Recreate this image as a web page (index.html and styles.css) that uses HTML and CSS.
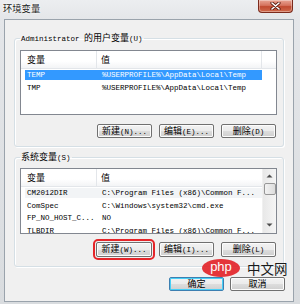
FILE: index.html
```html
<!DOCTYPE html>
<html>
<head>
<meta charset="utf-8">
<link rel="stylesheet" href="styles.css">
</head>
<body>
<div class="win">
  <div class="titlebar">
    <span class="title">环境变量</span>
    <div class="close"><svg width="11" height="8" viewBox="0 0 11 8"><path d="M2 1 L9 7 M9 1 L2 7" stroke="#5a1a10" stroke-width="3.2" stroke-linecap="round"/><path d="M2 1 L9 7 M9 1 L2 7" stroke="#fff" stroke-width="1.6" stroke-linecap="round"/></svg></div>
  </div>
  <div class="client">
    <fieldset class="group g1">
      <legend>Administrator <span class="c">的用户变量</span>(U)</legend>
      <div class="list l1">
        <div class="hdr">
          <div class="hc h1"><span class="c">变量</span></div>
          <div class="hc h2"><span class="c">值</span></div>
          <div class="hc hf"></div>
        </div>
        <div class="row sel"><span class="k">TEMP</span><span class="v">%USERPROFILE%\AppData\Local\Temp</span></div>
        <div class="row"><span class="k">TMP</span><span class="v">%USERPROFILE%\AppData\Local\Temp</span></div>
      </div>
      <div class="btns b1">
        <button class="btn"><span class="c">新建</span>(N)...</button>
        <button class="btn"><span class="c">编辑</span>(E)...</button>
        <button class="btn"><span class="c">删除</span>(D)</button>
      </div>
    </fieldset>
    <fieldset class="group g2">
      <legend><span class="c">系统变量</span>(S)</legend>
      <div class="list l2">
        <div class="lmain">
          <div class="hdr">
            <div class="hc h1"><span class="c">变量</span></div>
            <div class="hc h2b"><span class="c">值</span></div>
          </div>
          <div class="row hot"><span class="k">CM2012DIR</span><span class="v">C:\Program Files (x86)\Common F...</span></div>
          <div class="row"><span class="k">ComSpec</span><span class="v">C:\Windows\system32\cmd.exe</span></div>
          <div class="row"><span class="k">FP_NO_HOST_C...</span><span class="v">NO</span></div>
          <div class="row"><span class="k">TLBDIR</span><span class="v">C:\Program Files (x86)\Common F...</span></div>
        </div>
        <div class="sbar">
          <div class="arrow up"><svg width="7" height="4" viewBox="0 0 7 4"><path d="M0.5 3.5 L3.5 0.5 L6.5 3.5 Z" fill="#4d4d4d"/></svg></div>
          <div class="thumb"></div>
          <div class="track"></div>
          <div class="arrow dn"><svg width="7" height="4" viewBox="0 0 7 4"><path d="M0.5 0.5 L3.5 3.5 L6.5 0.5 Z" fill="#4d4d4d"/></svg></div>
        </div>
      </div>
      <div class="btns b2">
        <button class="btn hl"><span class="c">新建</span>(W)...</button>
        <button class="btn"><span class="c">编辑</span>(I)...</button>
        <button class="btn"><span class="c">删除</span>(L)</button>
      </div>
    </fieldset>
    <div class="footer">
      <button class="btn def"><span class="c">确定</span></button>
      <button class="btn"><span class="c">取消</span></button>
    </div>
  </div>
  <div class="wm"><span class="php">php</span><span class="cn">中文网</span></div>
</div>
</body>
</html>
```
FILE: styles.css
```css
* { box-sizing: border-box; }
html, body { margin: 0; padding: 0; }
body {
  width: 300px;
  height: 304px;
  overflow: hidden;
  background: #dfe2e6;
  font-family: "Liberation Mono", "Noto Sans CJK SC", monospace;
  font-size: 7.5px;
  color: #000;
}
.c { font-family: "Noto Sans CJK SC", sans-serif; font-size: 9px; }
.win {
  position: relative;
  width: 300px;
  height: 304px;
  display: flex;
  flex-direction: column;
  background: linear-gradient(180deg, #eceef0 0px, #e4e6e9 19px, #d9dcdf 304px);
}
.titlebar {
  height: 19px;
  flex: none;
  display: flex;
  justify-content: space-between;
  align-items: flex-start;
  padding: 0 7px 0 3px;
}
.title {
  font-family: "Noto Sans CJK SC", sans-serif;
  font-size: 9.3px;
  line-height: 10px;
  margin-top: 3px;
  color: #222;
  text-shadow: 0 0 3px #fff, 0 0 2px #fff;
}
.close {
  width: 35px;
  height: 13px;
  border: 1px solid #7b2a1c;
  border-top: none;
  border-radius: 0 0 4px 4px;
  background: linear-gradient(180deg, #e8a493 0%, #d5735e 45%, #c14a30 55%, #cf6a4c 100%);
  display: flex;
  align-items: center;
  justify-content: center;
  box-shadow: inset 0 0 0 1px rgba(255,255,255,0.35);
}
.client {
  flex: 1;
  margin: 0 6px 2px 4px;
  border: 1px solid #9aa3ac;
  background: #f0f0f0;
  display: flex;
  flex-direction: column;
}
.group {
  margin: 0 9px;
  border: 1px solid #d5dfe5;
  border-radius: 3px;
  box-shadow: inset 1px 1px 0 #fff, 1px 1px 0 #fff;
  padding: 0 6px 8px 5px;
  min-width: 0;
  flex: none;
}
.group legend {
  padding: 0 1px;
  line-height: 10px;
  height: 10px;
  white-space: nowrap;
}
.g1 { margin-top: 13px; padding-top: 7px; }
.g2 { margin-top: 5px; padding-top: 6px; padding-bottom: 9px; }
.list {
  border: 1px solid #828790;
  background: #fff;
  overflow: hidden;
}
.l1 { height: 65px; }
.l2 { height: 66px; display: flex; }
.lmain { flex: 1; min-width: 0; }
.hdr {
  display: flex;
  height: 18px;
  background: linear-gradient(180deg, #fff 0%, #fff 60%, #f3f4f6 100%);
  border-bottom: 1px solid #e3e6ea;
}
.hc {
  display: flex;
  align-items: center;
  padding-left: 6px;
  border-right: 1px solid #e3e6ea;
}
.h1 { width: 76px; }
.h2 { width: 165px; padding-left: 4px; }
.h2b { flex: 1; padding-left: 4px; border-right: none; }
.hf { flex: 1; border-right: none; }
.row {
  display: flex;
  height: 12.5px;
  line-height: 12.5px;
  margin-left: 4px;
  width: 237px;
  white-space: nowrap;
}
.row .k { width: 72px; padding-left: 2px; overflow: hidden; }
.row .v { flex: 1; padding-left: 5px; overflow: hidden; }
.row.sel {
  color: #fff;
  background: linear-gradient(#3399ff, #3399ff) no-repeat center / 100% 10px;
}
.l2 .row { width: auto; }
.row.hot { background: linear-gradient(#f2f4f6, #f2f4f6) no-repeat center / 100% 10px; }
.sbar {
  width: 14px;
  display: flex;
  flex-direction: column;
  align-items: center;
  background: linear-gradient(90deg, #e8e8e8, #f5f5f5);
  border-left: 1px solid #f0f0f0;
}
.arrow { height: 12px; display: flex; align-items: center; justify-content: center; }
.arrow.up { margin-top: 1px; }
.thumb {
  width: 12px;
  height: 12px;
  border: 1px solid #979797;
  border-radius: 2px;
  background: linear-gradient(90deg, #f2f2f2, #dcdcdc);
  margin-top: 1px;
}
.track { flex: 1; }
.arrow.dn { margin-bottom: 2px; }
.btns {
  display: flex;
  justify-content: flex-end;
  gap: 7px;
  padding-right: 1px;
}
.b1 { margin-top: 9px; }
.b2 { margin-top: 8px; }
.btn {
  width: 55px;
  height: 14px;
  padding: 0;
  margin: 0;
  border: 1px solid #707070;
  border-radius: 2px;
  background: linear-gradient(180deg, #f2f2f2 0%, #ebebeb 50%, #dddddd 51%, #cfcfcf 100%);
  box-shadow: inset 0 0 0 1px #fcfcfc;
  font-family: "Liberation Mono", "Noto Sans CJK SC", monospace;
  font-size: 7.5px;
  line-height: 12px;
  color: #000;
  white-space: nowrap;
}
.b2 .btn { height: 15px; }
.btn.hl { width: 56px; outline: 2px solid #e5262a; outline-offset: 1px; }
.btn.def { border-color: #3c7fb1; box-shadow: inset 0 0 0 1px #48d0f7; }
.footer {
  display: flex;
  justify-content: flex-end;
  gap: 6px;
  padding-right: 8px;
  margin-top: 10px;
}
.wm {
  position: absolute;
  left: 202px;
  top: 259px;
  display: flex;
  align-items: center;
  gap: 7px;
}
.php {
  width: 38px;
  height: 18px;
  border-radius: 50%;
  background: #e3262b;
  color: #fff;
  font-family: "Liberation Sans", sans-serif;
  font-size: 13px;
  line-height: 16px;
  text-align: center;
  opacity: 0.92;
}
.cn {
  font-family: "Noto Sans CJK SC", sans-serif;
  font-size: 13.5px;
  line-height: 14px;
  color: #1a1a1a;
}
```
